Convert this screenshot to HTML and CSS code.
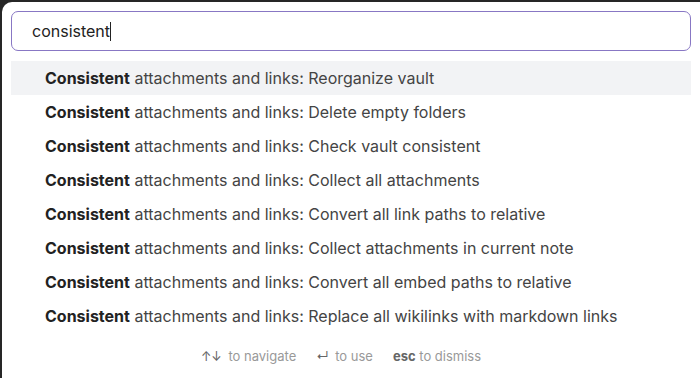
FILE: index.html
```html
<!DOCTYPE html>
<html lang="en">
<head>
  <meta charset="UTF-8" />
  <title>Command palette</title>
  <link rel="stylesheet" href="styles.css">
</head>
<body>
  <div class="modal">
    <div class="search">
      <span class="query">consistent</span><span class="caret"></span>
    </div>

    <div class="results">
      <div class="item active"><b>Consistent</b> attachments and links: Reorganize vault</div>
      <div class="item"><b>Consistent</b> attachments and links: Delete empty folders</div>
      <div class="item"><b>Consistent</b> attachments and links: Check vault consistent</div>
      <div class="item"><b>Consistent</b> attachments and links: Collect all attachments</div>
      <div class="item"><b>Consistent</b> attachments and links: Convert all link paths to relative</div>
      <div class="item"><b>Consistent</b> attachments and links: Collect attachments in current note</div>
      <div class="item"><b>Consistent</b> attachments and links: Convert all embed paths to relative</div>
      <div class="item"><b>Consistent</b> attachments and links: Replace all wikilinks with markdown links</div>
    </div>

    <div class="hints">
      <span class="hint"><span class="key">↑↓</span> to navigate</span>
      <span class="hint"><span class="key">↵</span> to use</span>
      <span class="hint"><b>esc</b> to dismiss</span>
    </div>
  </div>
</body>
</html>
```

FILE: styles.css
```css
body {
  margin: 0;
  background-color: #262626;
  font-family: Inter, "Noto Sans", sans-serif;
  height: 378px;
  overflow: hidden;
}

.modal {
  margin: 2px 0 0 2px;
  width: 708px;
  height: 376px;
  background-color: white;
  border-radius: 10px 10px 0 0;
  padding: 9px 0 0 9px;
  box-sizing: border-box;
}

.search {
  width: 680px;
  height: 40px;
  box-sizing: border-box;
  border: 1px solid #8877c4;
  border-radius: 7px;
  padding: 0 20px;
  display: flex;
  align-items: center;
  font-size: 16px;
  color: #222;
}

.caret {
  display: inline-block;
  width: 1px;
  height: 19px;
  background-color: #222;
}

.results {
  margin-top: 10px;
  width: 680px;
}

.item {
  height: 34px;
  line-height: 34px;
  padding-left: 34px;
  font-size: 16px;
  color: #444;
}

.item b {
  color: #222;
  font-weight: 700;
}

.item.active {
  background-color: #f2f3f5;
}

.hints {
  width: 680px;
  box-sizing: border-box;
  padding-right: 20px;
  margin-top: 15px;
  display: flex;
  justify-content: center;
  gap: 20px;
  font-size: 13px;
  color: #999;
}

.hints b {
  color: #666;
  font-weight: 700;
}

.key {
  font-size: 12.5px;
  margin-right: 3px;
  color: #666;
}
```
